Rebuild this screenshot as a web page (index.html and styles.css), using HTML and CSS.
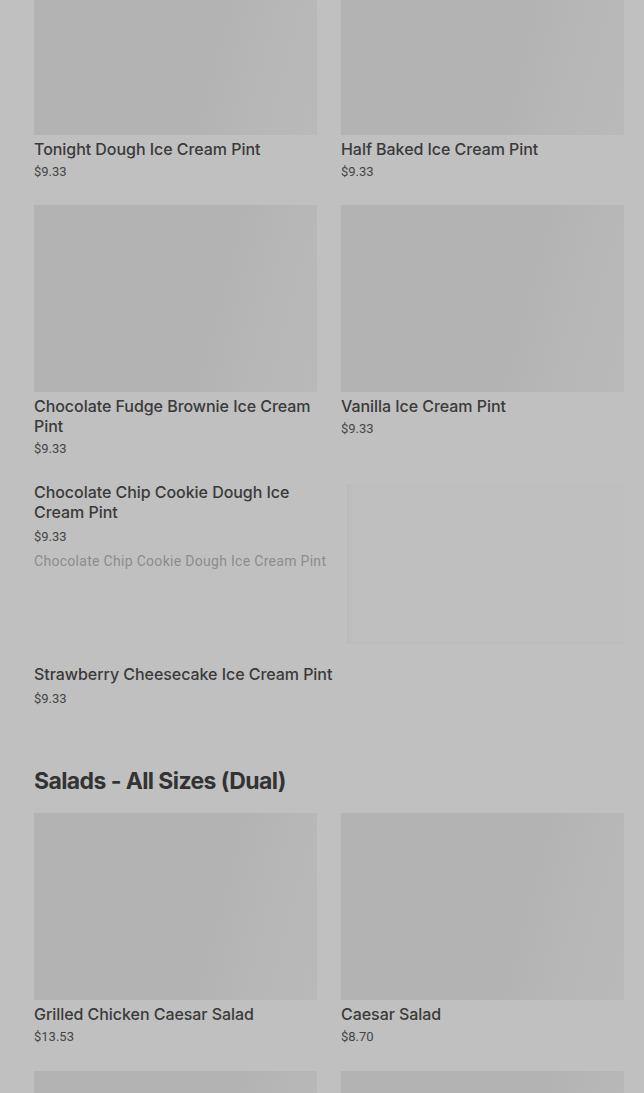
FILE: index.html
```html
<!DOCTYPE html>
<html>
<head>
<meta charset="utf-8">
<link rel="stylesheet" href="styles.css">
</head>
<body>
<main class="page">
  <section class="grid grid-top">
    <div class="card"><div class="img"></div><div class="name">Tonight Dough Ice Cream Pint</div><div class="price">$9.33</div></div>
    <div class="card"><div class="img"></div><div class="name">Half Baked Ice Cream Pint</div><div class="price">$9.33</div></div>
    <div class="card"><div class="img"></div><div class="name">Chocolate Fudge Brownie Ice Cream Pint</div><div class="price">$9.33</div></div>
    <div class="card"><div class="img"></div><div class="name">Vanilla Ice Cream Pint</div><div class="price">$9.33</div></div>
  </section>
  <section class="list">
    <div class="hcard">
      <div class="htext">
        <div class="name">Chocolate Chip Cookie Dough Ice Cream Pint</div>
        <div class="price hprice">$9.33</div>
        <div class="desc">Chocolate Chip Cookie Dough Ice Cream Pint</div>
      </div>
      <div class="himg"></div>
    </div>
    <div class="hcard hcard-noimg">
      <div class="htext">
        <div class="name">Strawberry Cheesecake Ice Cream Pint</div>
        <div class="price hprice">$9.33</div>
      </div>
    </div>
  </section>
  <h2 class="section-title">Salads - All Sizes (Dual)</h2>
  <section class="grid grid-salads">
    <div class="card"><div class="img"></div><div class="name">Grilled Chicken Caesar Salad</div><div class="price">$13.53</div></div>
    <div class="card"><div class="img"></div><div class="name">Caesar Salad</div><div class="price">$8.70</div></div>
    <div class="card"><div class="img"></div></div>
    <div class="card"><div class="img"></div></div>
  </section>
</main>
</body>
</html>
```
FILE: styles.css
```css
html, body {
  margin: 0;
  padding: 0;
  background: #c0c0c0;
  overflow: hidden;
}
body {
  font-family: Roboto, "Liberation Sans", sans-serif;
  color: #3a3a3a;
}
.page {
  padding: 0 20px 0 34px;
  margin-top: -52px;
}
.grid {
  display: grid;
  grid-template-columns: 1fr 1fr;
  column-gap: 24px;
  row-gap: 24px;
}
.grid-salads {
  row-gap: 25px;
}
.img {
  height: 187px;
  background: linear-gradient(105deg, #b3b3b3 0%, #b3b3b3 62%, #b7b7b7 80%, #b9b9b9 100%);
}
.name {
  margin-top: 4px;
  font-family: Inter, Roboto, sans-serif;
  font-size: 16px;
  line-height: 20px;
  font-weight: 500;
  letter-spacing: -0.05px;
  color: #3a3a3a;
}
.price {
  margin-top: 4px;
  font-size: 13px;
  line-height: 18px;
  color: #454545;
}
.list {
  margin-top: 24px;
  display: flex;
  flex-direction: column;
  gap: 20px;
}
.hcard {
  display: grid;
  grid-template-columns: 1fr 277px;
  column-gap: 21px;
}
.hcard-noimg {
  grid-template-columns: 1fr;
}
.hcard .name {
  margin-top: 0;
}
.hprice {
  margin-top: 6px;
}
.desc {
  margin-top: 6px;
  font-size: 14px;
  line-height: 18px;
  letter-spacing: 0.3px;
  color: #8c8c8c;
  white-space: nowrap;
}
.himg {
  margin-top: 2px;
  height: 160px;
  background: #bfbfbf;
  box-shadow: inset 5px 0 4px -3px #b8b8b8, inset 0 -2px 3px -2px #bababa;
}
.section-title {
  margin: 57px 0 16px;
  font-family: Inter, "Noto Sans", sans-serif;
  font-size: 23px;
  line-height: 32px;
  font-weight: 700;
  letter-spacing: -0.6px;
  color: #333333;
}
```
